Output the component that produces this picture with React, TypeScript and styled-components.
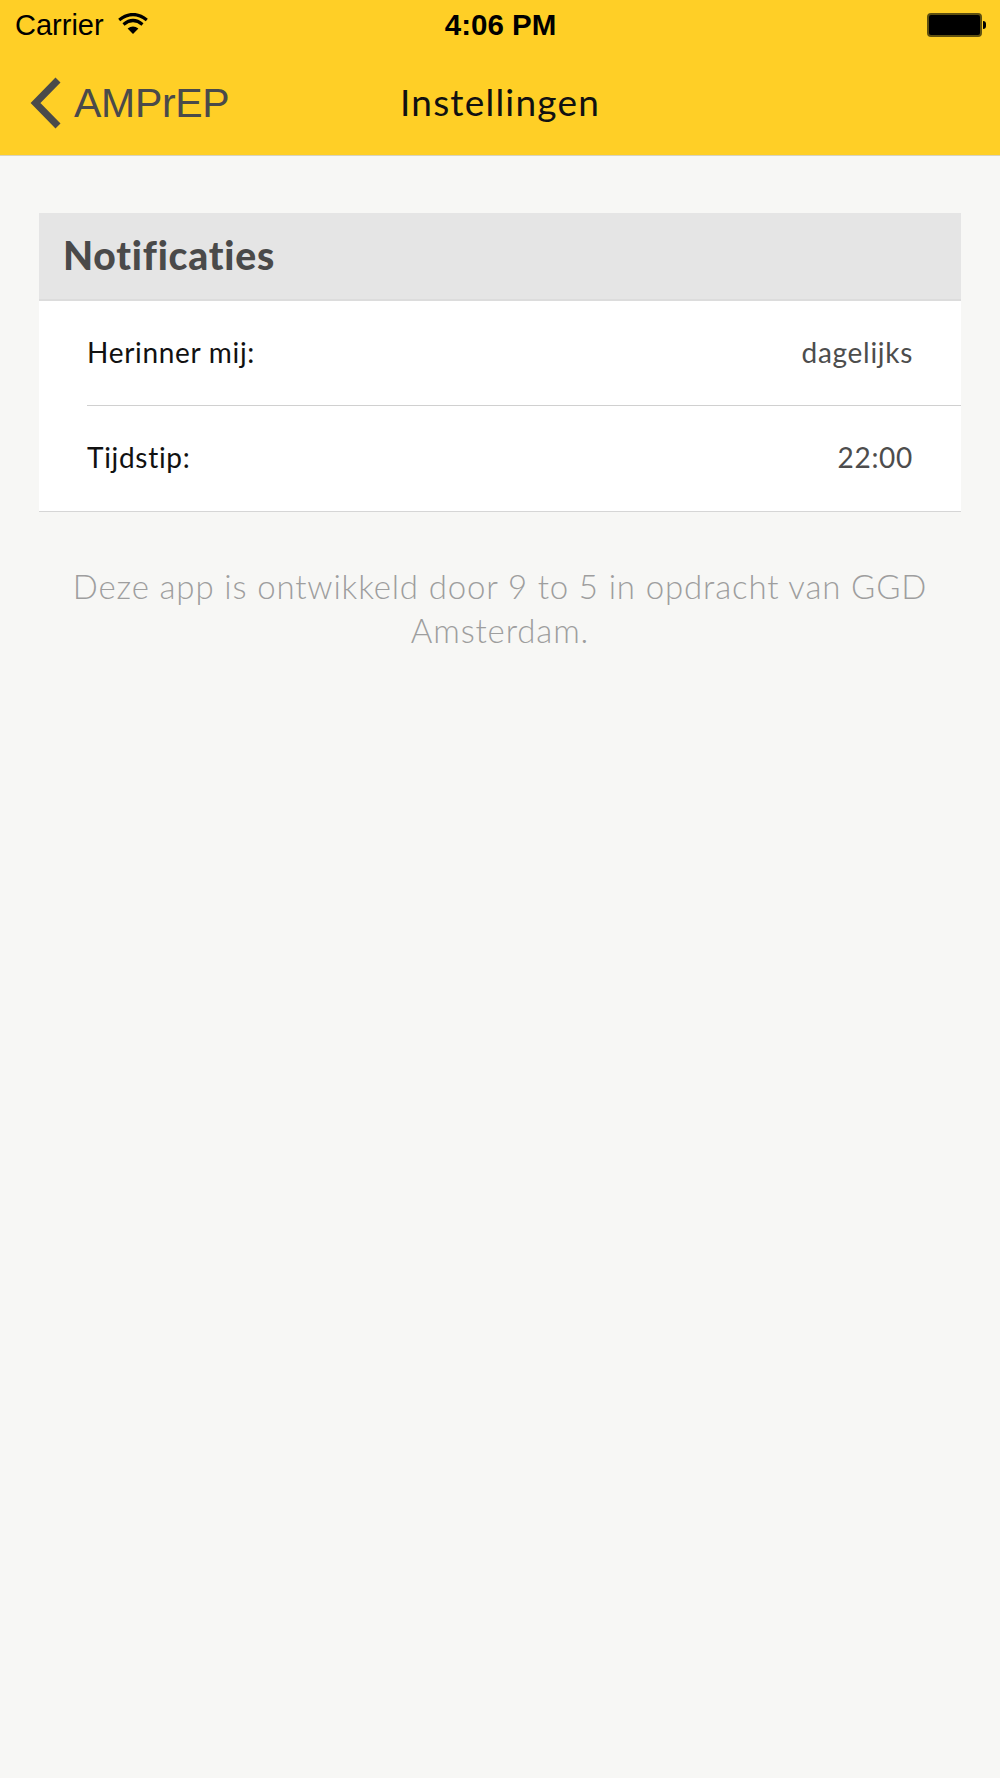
import { FC } from "react";
import styled, { createGlobalStyle } from "styled-components";

const GlobalStyle = createGlobalStyle`
  html, body {
    margin: 0;
    padding: 0;
    background: #f7f7f5;
  }
  * {
    box-sizing: border-box;
  }
`;

const rows = [
  { label: "Herinner mij:", value: "dagelijks" },
  { label: "Tijdstip:", value: "22:00" },
];

const WifiIcon: FC = () => (
  <svg width="30" height="22" viewBox="0 0 30 22">
    <path d="M15 21 L9.6 15.4 Q15 11.4 20.4 15.4 Z" fill="#000" />
    <path d="M5.5 11.4 Q15 3.6 24.5 11.4" fill="none" stroke="#000" strokeWidth="3.2" />
    <path d="M1.2 7 Q15 -4 28.8 7" fill="none" stroke="#000" strokeWidth="3.2" />
  </svg>
);

const BackIcon: FC = () => (
  <svg width="32" height="52" viewBox="0 0 32 52">
    <path d="M29 3 L6.5 26 L29 49" fill="none" stroke="#4a4a4a" strokeWidth="7" />
  </svg>
);

export default function App() {
  return (
    <StRoot>
      <GlobalStyle />
      <StHeader>
        <StStatusBar>
          <StCarrier>
            Carrier
            <WifiIcon />
          </StCarrier>
          <StTime>4:06 PM</StTime>
          <StBattery>
            <StBatteryBody />
            <StBatteryTip />
          </StBattery>
        </StStatusBar>
        <StNavBar>
          <StBack>
            <BackIcon />
            <StBackLabel>AMPrEP</StBackLabel>
          </StBack>
          <StTitle>Instellingen</StTitle>
        </StNavBar>
      </StHeader>
      <StContent>
        <StSection>
          <StSectionTitle>Notificaties</StSectionTitle>
          <StList>
            {rows.map((row) => (
              <StRow key={row.label}>
                <StLabel>{row.label}</StLabel>
                <StValue>{row.value}</StValue>
              </StRow>
            ))}
          </StList>
        </StSection>
        <StNote>Deze app is ontwikkeld door 9 to 5 in opdracht van GGD Amsterdam.</StNote>
      </StContent>
    </StRoot>
  );
}

const StRoot = styled.div`
  min-height: 1778px;
  background: #f7f7f5;
  font-family: "Lato", "Liberation Sans", sans-serif;
`;

const StHeader = styled.header`
  height: 156px;
  background: #ffcf26;
  border-bottom: 1px solid #d8d3bd;
`;

const StStatusBar = styled.div`
  display: grid;
  grid-template-columns: 1fr auto 1fr;
  align-items: center;
  height: 50px;
  padding: 0 14px 0 15px;
  font-family: "Liberation Sans", sans-serif;
  color: #000;
`;

const StCarrier = styled.div`
  display: flex;
  align-items: center;
  gap: 14px;
  font-size: 29px;

  svg {
    margin-top: -3px;
  }
`;

const StTime = styled.div`
  font-size: 29.5px;
  font-weight: 700;
`;

const StBattery = styled.div`
  display: flex;
  align-items: center;
  justify-content: flex-end;
  margin-top: -1px;
`;

const StBatteryBody = styled.div`
  width: 55px;
  height: 24px;
  background: #000;
  border: 2px solid #5f5010;
  border-radius: 4px;
`;

const StBatteryTip = styled.div`
  width: 3px;
  height: 8px;
  background: #000;
  border-radius: 0 3px 3px 0;
  margin-left: 1px;
`;

const StNavBar = styled.div`
  position: relative;
  display: flex;
  align-items: center;
  justify-content: center;
  height: 105px;
`;

const StBack = styled.div`
  position: absolute;
  left: 29px;
  top: 27px;
  display: flex;
  align-items: center;
  gap: 13px;
`;

const StBackLabel = styled.span`
  font-family: "Liberation Sans", sans-serif;
  font-size: 41px;
  color: #4a4a4a;
  letter-spacing: -0.3px;
`;

const StTitle = styled.h1`
  margin: 0 0 2px;
  font-size: 37px;
  font-weight: 400;
  color: #111;
  letter-spacing: 1.2px;
`;

const StContent = styled.main`
  padding: 57px 39px 0;
`;

const StSection = styled.section`
  background: #fff;
  border-bottom: 1px solid #d6d6d6;
`;

const StSectionTitle = styled.h2`
  display: flex;
  align-items: center;
  height: 88px;
  margin: 0;
  padding: 0 24px 2px;
  background: #e5e5e5;
  border-bottom: 2px solid #dcdcdc;
  font-size: 39px;
  font-weight: 900;
  color: #4a4a4a;
  letter-spacing: 0.8px;
`;

const StList = styled.div`
  padding-left: 48px;
`;

const StRow = styled.div`
  display: flex;
  align-items: center;
  justify-content: space-between;
  height: 105px;
  padding: 0 48px 3px 0;
  font-size: 28px;
  letter-spacing: 0.7px;

  &:not(:last-child) {
    border-bottom: 1px solid #d0d0d0;
  }
`;

const StLabel = styled.span`
  color: #111;
`;

const StValue = styled.span`
  color: #4d4d4d;
`;

const StNote = styled.p`
  margin: 52px 0 0;
  text-align: center;
  font-size: 33px;
  font-weight: 300;
  line-height: 44px;
  color: #9e9e9e;
  letter-spacing: 0.85px;
`;
